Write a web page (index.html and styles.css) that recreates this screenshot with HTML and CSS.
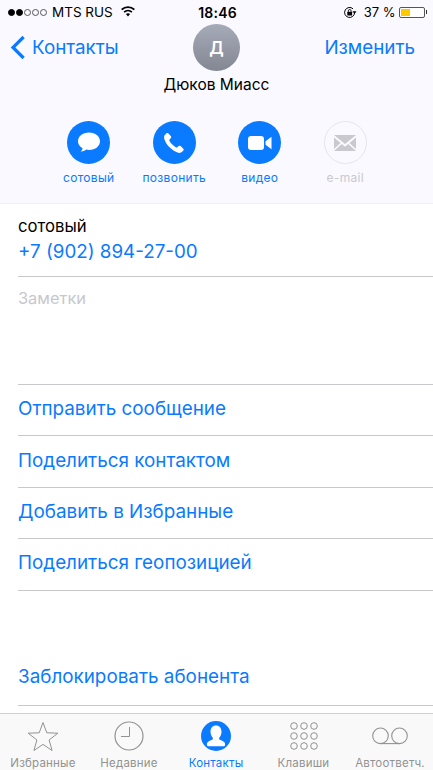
FILE: index.html
```html
<!DOCTYPE html>
<html lang="ru">
<head>
<meta charset="utf-8">
<title>Дюков Миасс</title>
<link rel="stylesheet" href="styles.css">
</head>
<body>
<div class="screen">
  <header class="head">
    <div class="status">
      <div class="status-left">
        <span class="dots"><i class="dot on"></i><i class="dot on"></i><i class="dot"></i><i class="dot"></i><i class="dot"></i></span>
        <span class="carrier">MTS RUS</span>
        <svg class="wifi" width="14" height="11" viewBox="0 0 15 11"><path d="M7.500 10.800 5.300 8.300a3.200 3.200 0 0 1 4.400 0zM3.900 6.800 2.700 5.400a7.200 7.200 0 0 1 9.600 0l-1.200 1.400a5.400 5.400 0 0 0-7.200 0zM1.400 4.100 0 2.700a11 11 0 0 1 15 0l-1.400 1.400a9 9 0 0 0-12.200 0z" fill="#000"/></svg>
      </div>
      <div class="time">18:46</div>
      <div class="status-right">
        <svg class="lock" width="14" height="13" viewBox="0 0 14 13"><path d="M11.600 6.500a5 5 0 1 1-1.600-3.700" fill="none" stroke="#000" stroke-width="1"/><path d="M9.500 5.200h4L11.500 8z" fill="#000"/><rect x="4.300" y="5.800" width="4.800" height="3.800" rx=".5" fill="#000"/><path d="M5.300 5.800V4.900a1.400 1.400 0 0 1 2.800 0v.9" fill="none" stroke="#000" stroke-width=".9"/></svg>
        <span class="pct">37 %</span>
        <span class="battery"><span class="battery-fill"></span></span><span class="battery-cap"></span>
      </div>
    </div>
    <div class="nav">
      <a class="back">
        <svg width="16" height="25" viewBox="0 0 16 25"><path d="M13.600 2 3 12.500 13.600 23" fill="none" stroke="#0a7afe" stroke-width="3.200"/></svg>
        <span>Контакты</span>
      </a>
      <div class="avatar">Д</div>
      <a class="edit">Изменить</a>
    </div>
    <div class="name">Дюков Миасс</div>
    <div class="actions">
      <div class="action">
        <span class="circle"><svg width="24" height="23" viewBox="0 0 24 23"><path d="M12 1.500C5.600 1.500 1 5.400 1 10.200c0 3 1.800 5.500 4.600 7-.2 1.200-.8 2.400-1.900 3.500 2.400-.2 4.300-1 5.700-2.100 1 .2 1.800.3 2.600.3 6.400 0 11-3.900 11-8.700S18.400 1.500 12 1.500z" fill="#fff"/></svg></span>
        <span class="action-label">сотовый</span>
      </div>
      <div class="action">
        <span class="circle"><svg width="22" height="22" viewBox="0 0 22 22"><path d="M5.200 1.300c-.6-.5-1.300-.4-1.900.1L1.800 2.900C.9 3.800.9 5.600 1.500 7.400c1 3 3.100 6 5.400 8.200 2.200 2.200 4.700 3.900 7.500 4.900 1.800.6 3.500.6 4.500-.4l1.400-1.500c.6-.6.6-1.300 0-1.900L17.600 14c-.6-.5-1.300-.5-1.900 0l-1.400 1.300c-.4.300-.8.400-1.200.2-1.400-.8-2.700-1.900-3.800-3-1.200-1.200-2.200-2.500-2.900-3.800-.2-.4-.2-.9.200-1.200l1.300-1.400c.5-.6.500-1.300.1-1.900z" fill="#fff"/></svg></span>
        <span class="action-label">позвонить</span>
      </div>
      <div class="action">
        <span class="circle"><svg width="24" height="14" viewBox="0 0 24 14"><rect x="0" y="0" width="16" height="14" rx="3" fill="#fff"/><path d="M17.500 5.200 23.500.8v12.400l-6-4.400z" fill="#fff"/></svg></span>
        <span class="action-label">видео</span>
      </div>
      <div class="action">
        <span class="circle circle-off"><svg width="22" height="16" viewBox="0 0 22 16"><path d="M0 0h22L11 9zM0 2.500 6.500 8 0 14zM22 2.500 15.500 8 22 14zM7.800 9 11 11.700 14.200 9 22 16H0z" fill="#c9c9ce"/></svg></span>
        <span class="action-label action-off">e-mail</span>
      </div>
    </div>
  </header>
  <main class="content">
    <section class="phone">
      <div class="phone-type">сотовый</div>
      <div class="phone-num">+7 (902) 894-27-00</div>
    </section>
    <section class="notes">Заметки</section>
    <a class="row">Отправить сообщение</a>
    <a class="row">Поделиться контактом</a>
    <a class="row">Добавить в Избранные</a>
    <a class="row">Поделиться геопозицией</a>
    <a class="row row-block">Заблокировать абонента</a>
  </main>
  <nav class="tabs">
    <div class="tab">
      <svg width="32" height="30" viewBox="0 0 32 30"><path d="M16 1.500 19.800 11.800 30.800 12.200 22.100 19 25.100 29.500 16 23.400 6.900 29.500 9.900 19 1.200 12.200 12.200 11.800z" fill="none" stroke="#929292" stroke-width="1"/></svg>
      <span>Избранные</span>
    </div>
    <div class="tab">
      <svg width="30" height="30" viewBox="0 0 30 30"><circle cx="15" cy="15" r="14" fill="none" stroke="#929292" stroke-width="1.200"/><path d="M15.500 6v9.500H7" fill="none" stroke="#929292" stroke-width="1"/></svg>
      <span>Недавние</span>
    </div>
    <div class="tab tab-on">
      <svg width="30" height="30" viewBox="0 0 30 30"><circle cx="15" cy="15" r="15" fill="#0a7afe"/><path d="M15 4.500c-3.500 0-5.500 2.700-5.500 6.200 0 2.400.9 4.500 2.200 5.700.3 1 .1 1.900-.6 2.400-1.300.9-3.400 1.200-4.500 2.400-.7.800-.8 2-.6 3.100.1.600.5.900 1 .9h16c.5 0 .9-.3 1-.9.2-1.100.1-2.300-.6-3.100-1.100-1.200-3.200-1.500-4.500-2.400-.7-.5-.9-1.400-.6-2.400 1.300-1.200 2.200-3.300 2.200-5.700 0-3.500-2-6.200-5.500-6.200z" fill="#fff"/></svg>
      <span>Контакты</span>
    </div>
    <div class="tab">
      <svg width="30" height="28" viewBox="0 0 30 28"><g fill="none" stroke="#929292" stroke-width="1"><circle cx="5" cy="4" r="3.300"/><circle cx="15" cy="4" r="3.300"/><circle cx="25" cy="4" r="3.300"/><circle cx="5" cy="14" r="3.300"/><circle cx="15" cy="14" r="3.300"/><circle cx="25" cy="14" r="3.300"/><circle cx="5" cy="24" r="3.300"/><circle cx="15" cy="24" r="3.300"/><circle cx="25" cy="24" r="3.300"/></g></svg>
      <span>Клавиши</span>
    </div>
    <div class="tab">
      <svg width="36" height="18" viewBox="0 0 36 18"><g fill="none" stroke="#929292" stroke-width="1.100"><circle cx="8.500" cy="8.800" r="7.800"/><circle cx="27.500" cy="8.800" r="7.800"/><path d="M8.500 16.600h19"/></g></svg>
      <span>Автоответч.</span>
    </div>
  </nav>
</div>
</body>
</html>
```
FILE: styles.css
```css
* { box-sizing: border-box; }
html, body { margin: 0; padding: 0; }
body { font-family: Inter, "Liberation Sans", sans-serif; background: #fff; }
.screen { width: 433px; height: 770px; display: flex; flex-direction: column; overflow: hidden; position: relative; }

.head { height: 204px; background: #f9f9ff; border-bottom: 1px solid #efeff4; flex: none; }
.status { height: 24px; display: grid; grid-template-columns: 1fr auto 1fr; align-items: center; padding: 0 6px 0 8px; font-size: 13px; color: #000; }
.status-left { display: flex; align-items: center; }
.dots { display: flex; gap: 1px; margin-right: 5px; }
.dot { width: 7px; height: 7px; border-radius: 50%; border: 1px solid #555; }
.dot.on { background: #000; border-color: #000; }
.carrier { font-size: 13.500px; }
.wifi { margin-left: 8px; margin-top: -2px; }
.time { font-size: 14px; font-weight: 600; letter-spacing: .2px; }
.status-right { display: flex; align-items: center; justify-content: flex-end; }
.lock { margin-right: 7px; }
.pct { font-size: 13px; margin-right: 3px; }
.battery { width: 26px; height: 11px; border: 1px solid #555; border-radius: 2px; padding: 1px; background: #fff; display: block; }
.battery-fill { display: block; width: 9px; height: 7px; background: #fdc900; }
.battery-cap { width: 1.500px; height: 4px; background: #333; margin-left: 1px; }

.nav { height: 46px; display: grid; grid-template-columns: 1fr 47px 1fr; align-items: center; padding: 0 18px; }
.back { display: flex; align-items: center; gap: 6px; color: #0a7afe; font-size: 18.800px; margin-left: -8px; }
.edit { justify-self: end; color: #0a7afe; font-size: 18.800px; }
.avatar { width: 47px; height: 47px; border-radius: 50%; background: linear-gradient(#a6abb8, #838792); color: #fff; font-size: 17px; font-weight: 600; display: flex; align-items: center; justify-content: center; }
.name { text-align: center; font-size: 15.500px; color: #000; margin-top: 3px; height: 24px; line-height: 24px; }

.actions { display: flex; justify-content: center; gap: 42.500px; margin-top: 24px; padding-left: 1px; }
.action { width: 43px; display: flex; flex-direction: column; align-items: center; }
.circle { width: 43px; height: 43px; border-radius: 50%; background: #0a7afe; display: flex; align-items: center; justify-content: center; flex: none; }
.circle-off { background: transparent; border: 1px solid #e5e5ea; }
.action-label { font-size: 12px; letter-spacing: .3px; color: #0a7afe; margin-top: 6px; white-space: nowrap; line-height: 16px; }
.action-off { color: #c9c9ce; }

.content { flex: 1; min-height: 0; display: flex; flex-direction: column; padding-left: 18px; background: #fff; }
.phone { height: 73px; border-bottom: 1px solid #c8c7cc; padding-top: 12px; }
.phone-type { font-size: 16.700px; line-height: 20px; color: #000; }
.phone-num { font-size: 18.800px; line-height: 24px; margin-top: 4px; color: #0a7afe; }
.notes { height: 108px; border-bottom: 1px solid #c8c7cc; font-size: 16.400px; color: #c7c7cc; padding-top: 11px; line-height: 20px; }
.row { height: 51.400px; border-bottom: 1px solid #c8c7cc; color: #0a7afe; font-size: 18.850px; display: flex; align-items: center; flex: none; padding-bottom: 3px; }
.row-block { height: 54px; margin-top: 61px; padding-bottom: 3px; }

.tabs { height: 57px; flex: none; background: #f9f9f9; border-top: 1px solid #d0d0d2; display: grid; grid-template-columns: 86px 86px 88px 87px 86px; }
.tab { display: flex; flex-direction: column; align-items: center; color: #929292; font-size: 11.500px; letter-spacing: .2px; white-space: nowrap; padding-top: 7px; position: relative; }
.tab svg { height: 30px; display: block; flex: none; }
.tab span { margin-top: 5px; line-height: 14px; }
.tab-on { color: #0a7afe; }
```
